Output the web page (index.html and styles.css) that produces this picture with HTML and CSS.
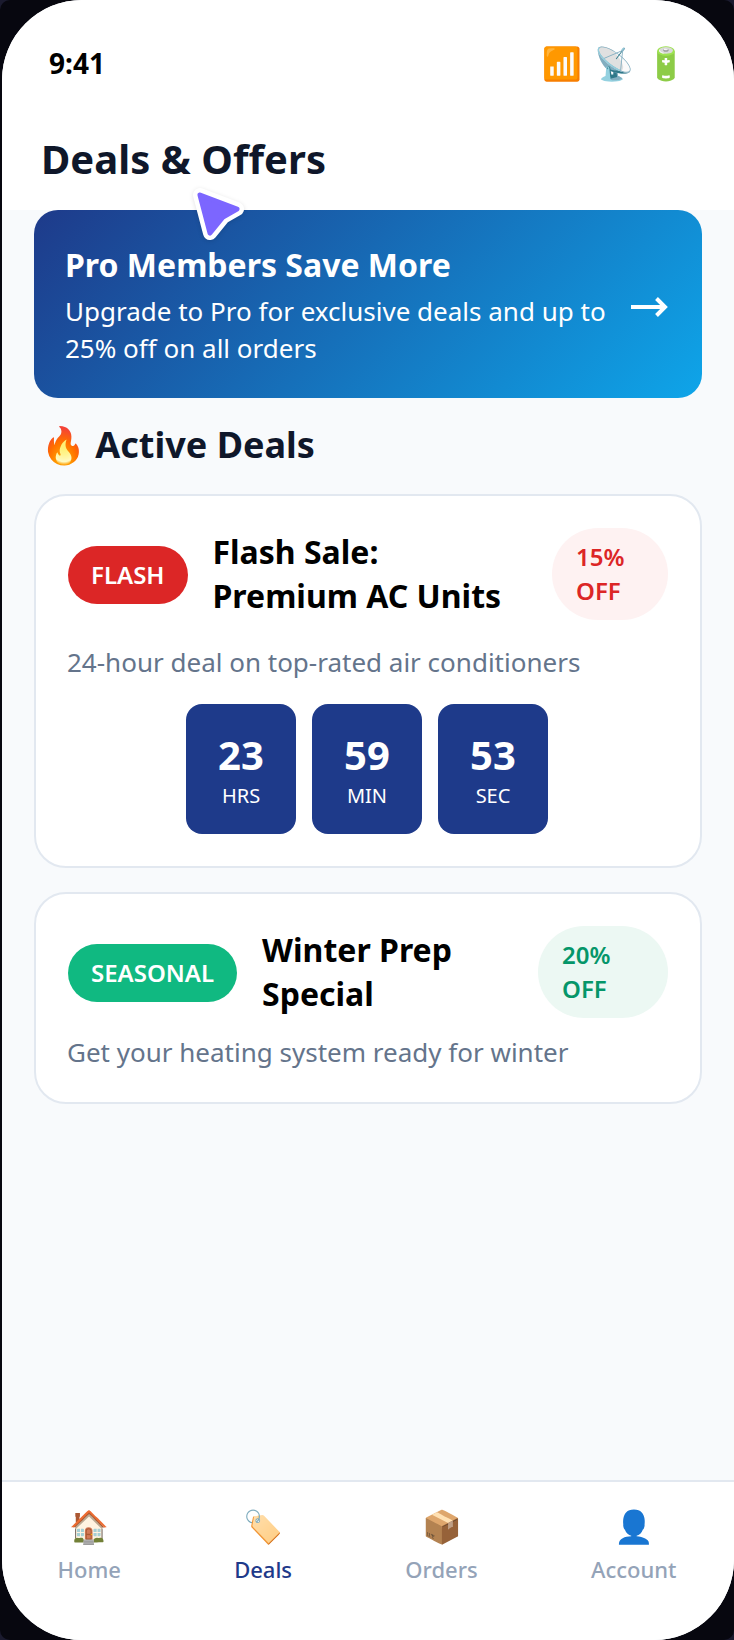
FILE: index.html
```html
<!DOCTYPE html>
<html lang="en">
<head>
<meta charset="utf-8">
<title>Deals &amp; Offers</title>
<link rel="stylesheet" href="styles.css">
</head>
<body>
<div class="shell">
<div class="phone">
  <header class="top">
    <div class="status">
      <span class="time">9:41</span>
      <span class="status-icons"><span>📶</span><span>📡</span><span>🔋</span></span>
    </div>
    <h1 class="title">Deals &amp; Offers</h1>
  </header>
  <main class="main">
    <section class="banner">
      <div class="banner-text">
        <h2 class="banner-title">Pro Members Save More</h2>
        <p class="banner-sub">Upgrade to Pro for exclusive deals and up to 25% off on all orders</p>
      </div>
      <svg class="banner-arrow" width="37" height="24" viewBox="0 0 37 24" aria-hidden="true">
        <path d="M0 12 H34 M25.5 3.5 L34 12 L25.5 20.5"/>
      </svg>
    </section>
    <h2 class="section-title">🔥 Active Deals</h2>
    <article class="card">
      <div class="card-head">
        <span class="tag tag-flash">FLASH</span>
        <h3 class="card-title">Flash Sale: Premium AC Units</h3>
        <span class="off off-red">15% OFF</span>
      </div>
      <p class="card-desc card-desc-timed">24-hour deal on top-rated air conditioners</p>
      <div class="timer">
        <div class="cell"><span class="num">23</span><span class="unit">HRS</span></div>
        <div class="cell"><span class="num">59</span><span class="unit">MIN</span></div>
        <div class="cell"><span class="num">53</span><span class="unit">SEC</span></div>
      </div>
    </article>
    <article class="card">
      <div class="card-head">
        <span class="tag tag-seasonal">SEASONAL</span>
        <h3 class="card-title">Winter Prep Special</h3>
        <span class="off off-green">20% OFF</span>
      </div>
      <p class="card-desc">Get your heating system ready for winter</p>
    </article>
  </main>
  <nav class="nav">
    <a class="nav-item"><span class="nav-icon">🏠</span><span>Home</span></a>
    <a class="nav-item active"><span class="nav-icon">🏷️</span><span>Deals</span></a>
    <a class="nav-item"><span class="nav-icon">📦</span><span>Orders</span></a>
    <a class="nav-item"><span class="nav-icon">👤</span><span>Account</span></a>
  </nav>
  <svg class="cursor" width="58" height="58" viewBox="0 0 58 58" aria-hidden="true">
    <path class="cursor-edge" d="M10 9 L47 23 L33 31 L20 47 Z"/>
    <path class="cursor-fill" d="M10 9 L47 23 L33 31 L20 47 Z"/>
  </svg>
</div>
</div>
</body>
</html>
```
FILE: styles.css
```css
* { box-sizing: border-box; margin: 0; padding: 0; }
html, body { height: 100%; }
body {
  background: #1a1a2e;
  font-family: "Noto Sans", sans-serif;
  overflow: hidden;
}
.shell {
  width: 734px;
  height: 1640px;
  padding-left: 2px;
  background: #07070f;
  border-radius: 10px;
}
.phone {
  position: relative;
  width: 732px;
  height: 1640px;
  display: flex;
  flex-direction: column;
  background: #f8fafc;
  border-radius: 80px;
  overflow: hidden;
}
.top {
  background: #fff;
  height: 210px;
  flex: none;
  padding: 0 40px 0 39px;
}
.status {
  display: flex;
  justify-content: space-between;
  align-items: center;
  padding: 43px 8px 1px 8px;
}
.time { font-size: 28px; font-weight: 700; color: #000; line-height: 40px; }
.status-icons { display: flex; gap: 12px; font-size: 32px; line-height: 40px; }
.title { margin-top: 47px; font-size: 40px; font-weight: 700; color: #0f172a; line-height: 56px; letter-spacing: 0.05px; }
.main { flex: 1; padding: 0 32px; }
.banner {
  height: 188px;
  border-radius: 24px;
  background: linear-gradient(135deg, #1e3a8a, #0ea5e9);
  color: #fff;
  display: flex;
  align-items: center;
  padding: 0 34px 0 31px;
  gap: 22px;
}
.banner-text { flex: 1; padding-top: 2px; }
.banner-title { font-size: 32px; font-weight: 700; line-height: 44px; }
.banner-sub { font-size: 26px; line-height: 37px; margin-top: 6px; }
.banner-arrow { flex: none; margin-top: 6px; fill: none; stroke: #fff; stroke-width: 4; }
.section-title { margin: 22px 0 24px 7px; font-size: 36px; font-weight: 700; color: #0f172a; line-height: 50px; }
.card {
  background: #fff;
  border: 2px solid #e2e8f0;
  border-radius: 32px;
  padding: 32px;
  margin-bottom: 24px;
}
.card-head { display: flex; align-items: center; gap: 25px; }
.tag { flex: none; color: #fff; font-size: 24px; font-weight: 600; line-height: 34px; padding: 12px 23px; border-radius: 46px; margin-top: 2px; }
.tag-flash { background: #dc2626; }
.tag-seasonal { background: #10b981; }
.card-title { flex: 1; font-size: 32px; font-weight: 700; color: #000; line-height: 44px; }
.off { flex: none; width: 116px; font-size: 24px; font-weight: 600; line-height: 34px; padding: 12px 24px; border-radius: 46px; }
.off-red { background: #fef2f2; color: #dc2626; }
.off-green { background: #ecf8f3; color: #059669; width: 130px; }
.card-desc { margin: 15px 0 -2px -1px; font-size: 26px; color: #64748b; line-height: 39px; }
.card-desc-timed { margin: 23px 0 0 -1px; }
.timer { display: flex; justify-content: center; gap: 16px; margin-top: 22px; padding-right: 2px; }
.cell {
  width: 110px;
  height: 130px;
  background: #1e3a8a;
  color: #fff;
  border-radius: 16px;
  display: flex;
  flex-direction: column;
  align-items: center;
  justify-content: center;
}
.num { font-size: 40px; font-weight: 700; line-height: 54px; }
.unit { font-size: 20px; line-height: 28px; }
.nav {
  flex: none;
  height: 160px;
  background: #fff;
  border-top: 2px solid #e2e8f0;
  display: flex;
  justify-content: space-between;
  padding: 20px 57.5px 0 55.5px;
}
.nav-item { display: flex; flex-direction: column; align-items: center; font-size: 22px; font-weight: 500; color: #94a3b8; line-height: 30px; }
.nav-item.active { color: #1e3a8a; }
.nav-icon { font-size: 32px; line-height: 48px; margin-bottom: 4px; }
.cursor { position: absolute; left: 188px; top: 186px; filter: drop-shadow(0 1px 2px rgba(0, 0, 0, 0.12)); }
.cursor-edge { fill: #fff; stroke: #fff; stroke-width: 14; stroke-linejoin: round; }
.cursor-fill { fill: #7c66ff; stroke: #7c66ff; stroke-width: 5; stroke-linejoin: round; }
```
